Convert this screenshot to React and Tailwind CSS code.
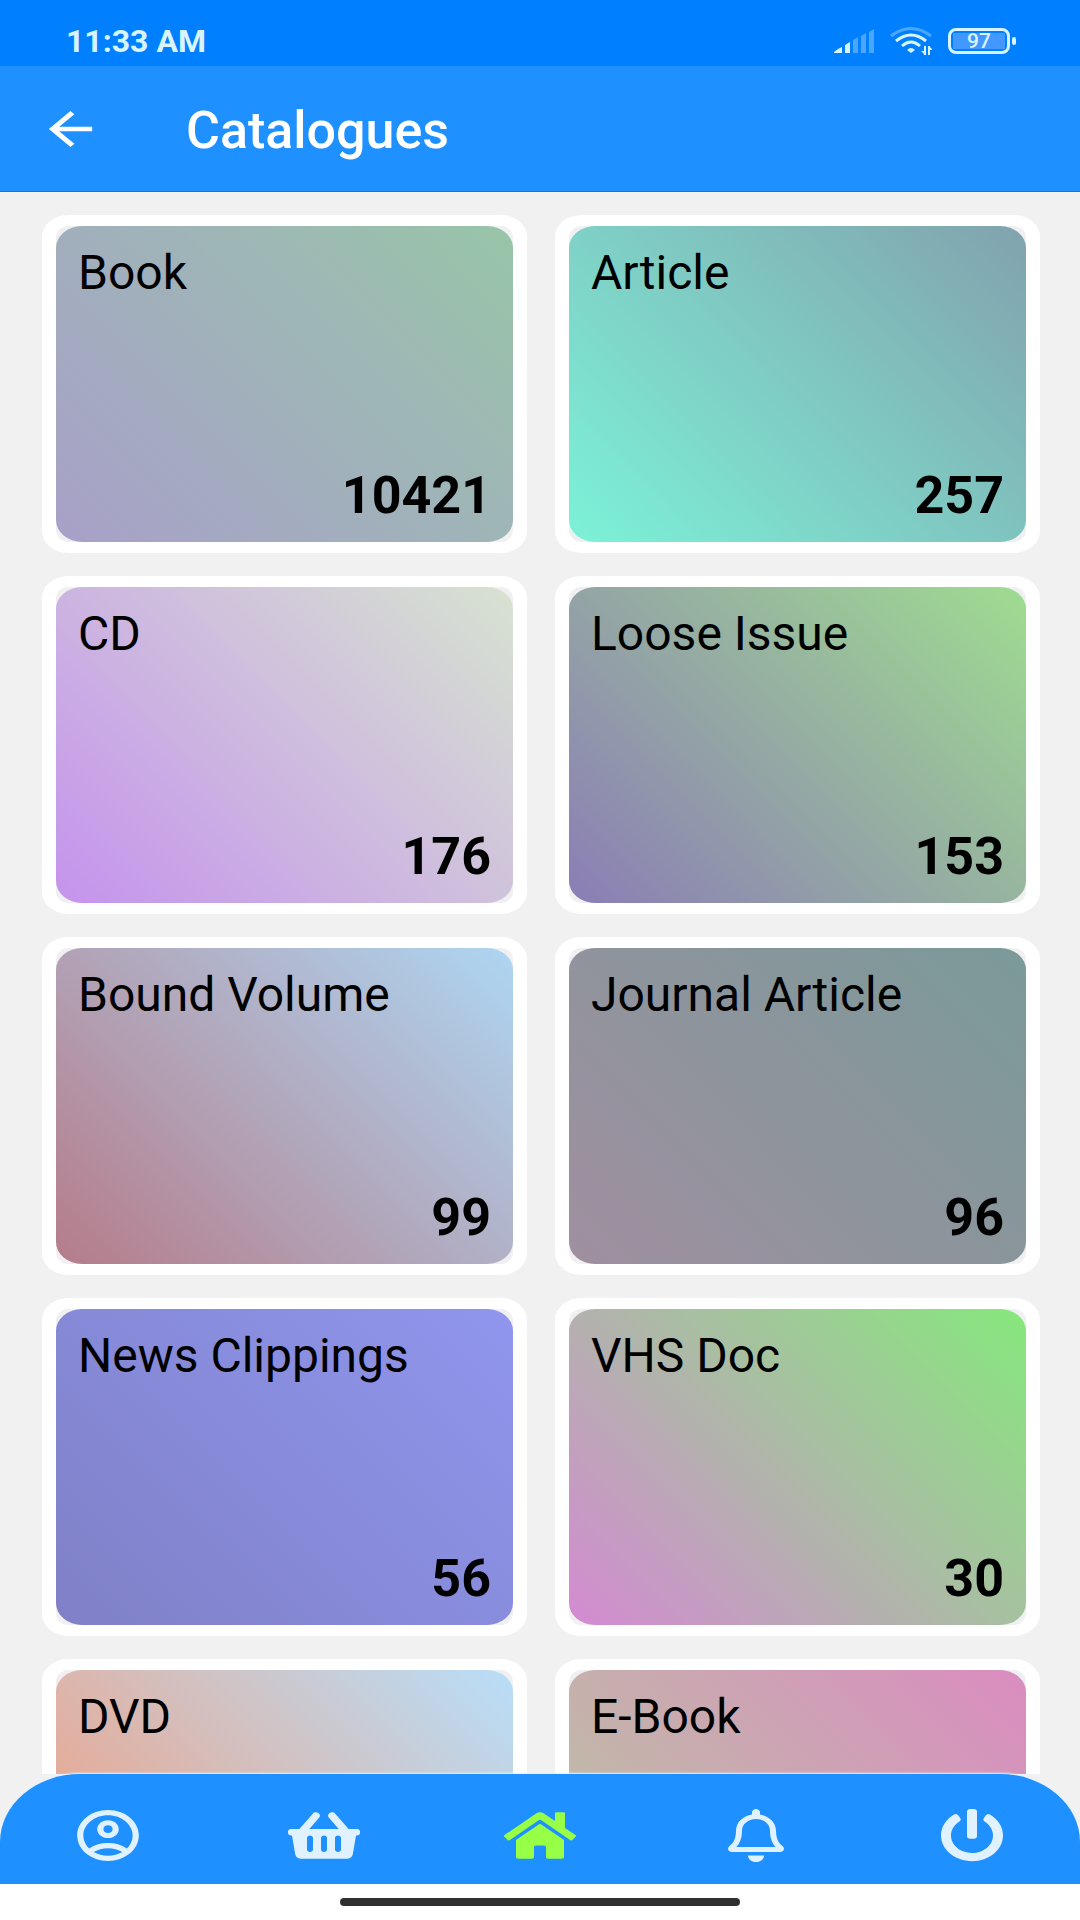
import React from 'react';
import { FaHome, FaPowerOff, FaRegBell, FaShoppingBasket } from 'react-icons/fa';
import { MdArrowBack, MdOutlineAccountCircle } from 'react-icons/md';

const catalogues = [
  { name: 'Book', total: 10421, gradient: 'bg-[linear-gradient(45deg,#a8a0c8,#a0b2ba_50%,#98c5a8)]' },
  { name: 'Article', total: 257, gradient: 'bg-[linear-gradient(45deg,#7cf2d8,#82a2ad)]' },
  { name: 'CD', total: 176, gradient: 'bg-[linear-gradient(45deg,#c593ed,#d7e3d0)]' },
  { name: 'Loose Issue', total: 153, gradient: 'bg-[linear-gradient(45deg,#8b7db5,#9fdc90)]' },
  { name: 'Bound Volume', total: 99, gradient: 'bg-[linear-gradient(45deg,#b57c8a,#aed6f2)]' },
  { name: 'Journal Article', total: 96, gradient: 'bg-[linear-gradient(45deg,#a08fa0,#7a9a98)]' },
  { name: 'News Clippings', total: 56, gradient: 'bg-[linear-gradient(45deg,#7f80c6,#9096ee)]' },
  { name: 'VHS Doc', total: 30, gradient: 'bg-[linear-gradient(45deg,#d48ad2,#86e87c)]' },
  { name: 'DVD', gradient: 'bg-[linear-gradient(45deg,#f59a78,#b8def8)]' },
  { name: 'E-Book', gradient: 'bg-[linear-gradient(45deg,#b8c8a0,#da8cc0)]' },
];

function StatusBar() {
  return (
    <div className="flex h-[66px] shrink-0 items-center justify-between bg-[#0080ff] pt-4 pr-16 pl-[66px] text-[#d8f4ff]">
      <span className="text-[32px] leading-none font-bold">11:33 AM</span>
      <div className="flex items-center gap-4">
        <svg className="h-6 w-10" viewBox="0 0 40 24" fill="currentColor" aria-hidden="true">
          <path d="M0 24v-1q3-3 8-5v6z" />
          <path d="M11 24v-8l5-3v11z" />
          <g fill="#4ba6ff">
            <path d="M19 24V11l5-3v16z" />
            <path d="M27 24V7l5-3v20z" />
            <path d="M35 24V3l5-3v24z" />
          </g>
        </svg>
        <svg className="h-7 w-[42px]" viewBox="0 0 42 28" fill="none" strokeWidth="3" aria-hidden="true">
          <path d="M1 9Q21-6 41 9" stroke="#4ba6ff" />
          <path d="M6 14Q21 2 36 14M12 19Q21 11 30 19" stroke="currentColor" />
          <path d="M17 23q4-4 8 0l-4 3z" fill="currentColor" />
          <path d="M35 19v9M39 28v-9" stroke="currentColor" strokeWidth="2" />
          <path d="M31 24h4v4zM43 23h-4v-4z" fill="currentColor" />
        </svg>
        <div className="flex items-center gap-0.5">
          <div className="flex h-[26px] w-[62px] rounded-lg border-[3px] border-current p-0.5">
            <span className="flex flex-1 items-center justify-center bg-[#4398ff] text-[21px] leading-none font-medium">
              97
            </span>
          </div>
          <span className="h-2 w-1 rounded-xs bg-current" />
        </div>
      </div>
    </div>
  );
}

function CatalogueCard({ name, total, gradient }) {
  return (
    <li className="rounded-[26px/22px] bg-white px-[14px] py-[11px]">
      <a href="#" className="block rounded-[12px] bg-[#f0f0f2]">
        <div className={`flex h-[316px] flex-col justify-between rounded-[26px/22px] px-[22px] py-5 ${gradient}`}>
          <span className="text-[48px] leading-[54px]">{name}</span>
          {total !== undefined && (
            <span className="text-right text-[52px] leading-[52px] font-bold">{total}</span>
          )}
        </div>
      </a>
    </li>
  );
}

function NavButton({ label, active, children }) {
  return (
    <button
      type="button"
      aria-label={label}
      className={`flex flex-1 items-center justify-center pt-3 ${active ? 'text-[#96ff46]' : 'text-[#e0f2ff]'}`}
    >
      {children}
    </button>
  );
}

function App() {
  return (
    <div className="flex h-screen flex-col overflow-hidden bg-[#f1f1f1] font-[Roboto,sans-serif] text-black">
      <StatusBar />

      <header className="flex h-[126px] shrink-0 items-center border-b border-[#1874d0] bg-[#1e90ff] pl-[38px] text-white">
        <button type="button" aria-label="Back">
          <MdArrowBack preserveAspectRatio="none" className="h-[54px] w-[65px]" />
        </button>
        <h1 className="pt-1 pl-[83px] text-[52px] font-medium">Catalogues</h1>
      </header>

      <main className="min-h-0 flex-1 overflow-hidden pt-[23px] pr-10 pl-[42px]">
        <ul className="grid grid-cols-2 gap-x-7 gap-y-[23px]">
          {catalogues.map((item) => (
            <CatalogueCard key={item.name} {...item} />
          ))}
        </ul>
      </main>

      <nav className="flex h-[110px] shrink-0 rounded-[80px_80px_0_0/68px_68px_0_0] bg-[#1e90ff] shadow-[0_-1px_2px_#e4f3ff]">
        <NavButton label="Profile">
          <MdOutlineAccountCircle preserveAspectRatio="none" className="h-[61px] w-[74px]" />
        </NavButton>
        <NavButton label="Basket">
          <FaShoppingBasket preserveAspectRatio="none" className="h-[53px] w-[72px]" />
        </NavButton>
        <NavButton label="Home" active>
          <FaHome preserveAspectRatio="none" className="h-[53px] w-[72px]" />
        </NavButton>
        <NavButton label="Notifications">
          <FaRegBell preserveAspectRatio="none" className="h-[53px] w-[56px]" />
        </NavButton>
        <NavButton label="Log out">
          <FaPowerOff preserveAspectRatio="none" className="h-[53px] w-[64px]" />
        </NavButton>
      </nav>

      {/* Android gesture bar */}
      <div className="flex h-9 shrink-0 items-center justify-center bg-white">
        <span className="h-2 w-[37%] rounded-full bg-[#303030]" />
      </div>
    </div>
  );
}

export default App;
